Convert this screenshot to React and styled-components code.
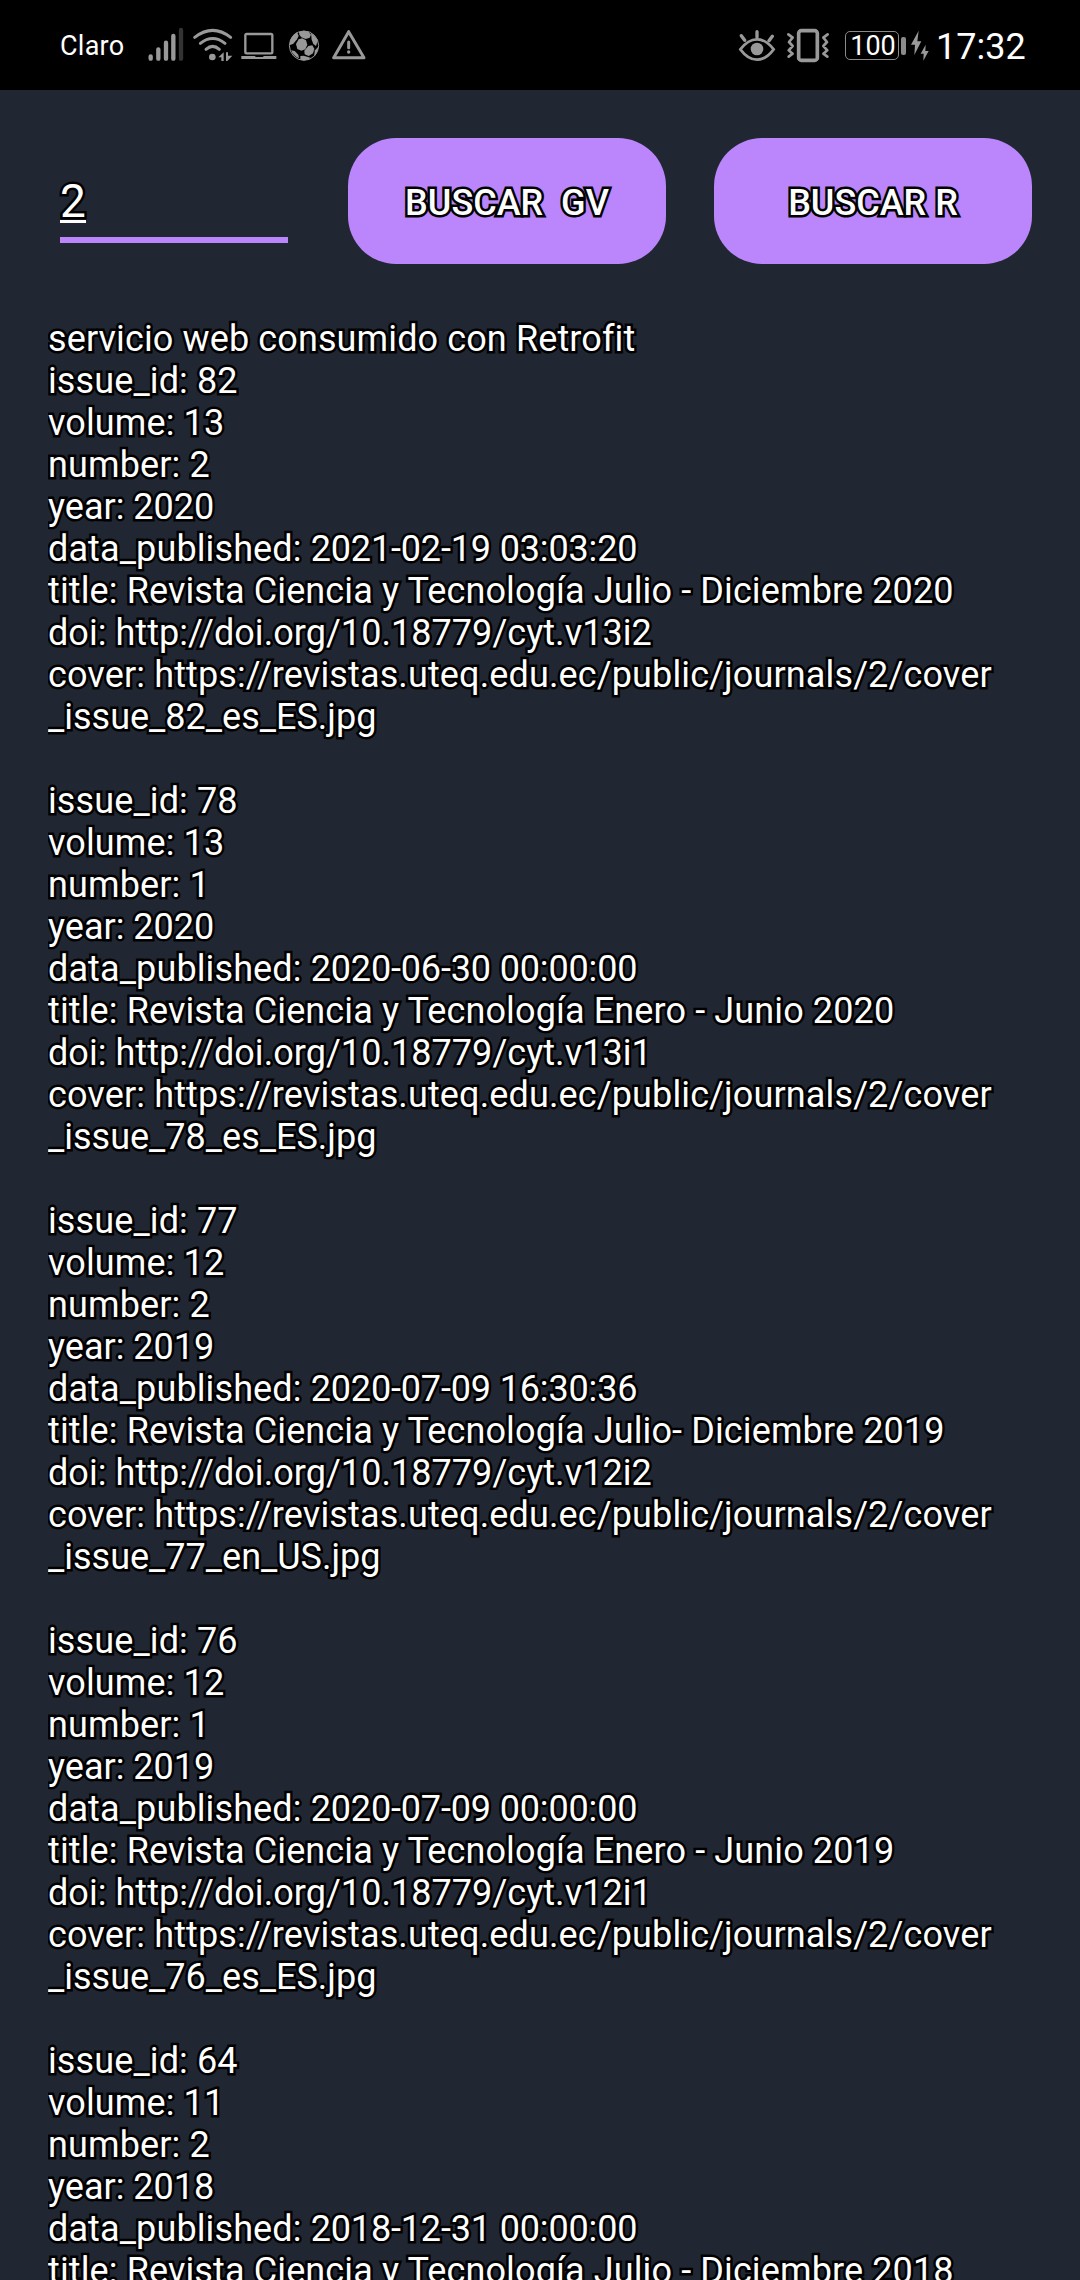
import React from 'react';
import styled, { createGlobalStyle } from 'styled-components';

const GlobalStyle = createGlobalStyle`
  * { box-sizing: border-box; }
  body { margin: 0; background: #212732; font-family: Roboto, sans-serif; }
`;

const Screen = styled.main`
  width: 1080px;
  height: 2280px;
  overflow: hidden;
  display: flex;
  flex-direction: column;
  background: #212732;
`;

const StatusBar = styled.header`
  flex: none;
  display: flex;
  align-items: flex-start;
  justify-content: space-between;
  height: 90px;
  padding: 20px 56px 0 60px;
  background: #000;
  color: #fff;
`;

const StatusGroup = styled.div`
  display: flex;
  align-items: flex-start;
`;

const StatusText = styled.span`
  font-size: ${(p) => p.$size}px;
  line-height: ${(p) => p.$line}px;
  letter-spacing: ${(p) => p.$tracking || 0}px;
  white-space: nowrap;
  width: ${(p) => p.$width}px;
`;

const Icon = styled.svg`
  display: block;
  flex: none;
  color: #999;
`;

const Battery = styled.div`
  display: flex;
  align-items: center;
  margin: 11px 1px 0 13px;
  gap: 2px;
`;

const BatteryBody = styled.span`
  display: flex;
  align-items: center;
  justify-content: center;
  width: 54px;
  height: 29px;
  padding-left: 2px;
  border: 1.5px solid #8a8a8a;
  border-radius: 5px;
  font-size: 27px;
  line-height: 28px;
`;

const BatteryTip = styled.span`
  width: 5px;
  height: 18px;
  border-radius: 2px;
  background: #8a8a8a;
`;

const outline = `
  color: #fff;
  -webkit-text-stroke: 5px #000;
  paint-order: stroke fill;
  stroke-linejoin: round;
`;

const Toolbar = styled.section`
  flex: none;
  display: flex;
  align-items: flex-start;
  gap: 48px;
  padding: 48px 48px 0 60px;
  height: 228px;
`;

const Field = styled.label`
  width: 228px;
  height: 105px;
  margin-right: 12px;
  padding-top: 36px;
  border-bottom: 6px solid #bb86fc;
`;

const FieldValue = styled.span`
  ${outline}
  display: block;
  width: 26px;
  height: 49px;
  border-bottom: 3px solid #fff;
  font-size: 46px;
  line-height: 54px;
`;

const SearchButton = styled.button`
  ${outline}
  width: 318px;
  height: 126px;
  padding: 4px 0 0;
  border: 0;
  border-radius: 48px;
  background: #bb86fc;
  font: 500 36px/42px Roboto, sans-serif;
  white-space: pre;
`;

const Results = styled.section`
  flex: 1;
  min-height: 0;
  margin: 0 48px;
  overflow: hidden;
`;

const Line = styled.p`
  ${outline}
  margin: 0;
  font-size: 36px;
  line-height: 42px;
  height: 42px;
  letter-spacing: ${(p) => p.$tracking ?? 0.12}px;
  white-space: pre;
`;

const Timestamp = styled.span`
  letter-spacing: -0.15px;
`;

const Issue = styled.article`
  margin-bottom: 42px;
`;

const issues = [
  { id: 82, volume: 13, number: 2, year: 2020, date: '2021-02-19 03:03:20', title: 'Julio - Diciembre 2020', file: '82_es_ES' },
  { id: 78, volume: 13, number: 1, year: 2020, date: '2020-06-30 00:00:00', title: 'Enero - Junio 2020', file: '78_es_ES' },
  { id: 77, volume: 12, number: 2, year: 2019, date: '2020-07-09 16:30:36', title: 'Julio- Diciembre 2019', file: '77_en_US' },
  { id: 76, volume: 12, number: 1, year: 2019, date: '2020-07-09 00:00:00', title: 'Enero - Junio 2019', file: '76_es_ES' },
  { id: 64, volume: 11, number: 2, year: 2018, date: '2018-12-31 00:00:00', title: 'Julio - Diciembre 2018' },
];

function IssueEntry({ issue }) {
  return (
    <Issue>
      <Line>issue_id: {issue.id}</Line>
      <Line>volume: {issue.volume}</Line>
      <Line>number: {issue.number}</Line>
      <Line $tracking={0}>year: {issue.year}</Line>
      <Line>data_published: <Timestamp>{issue.date}</Timestamp></Line>
      <Line>title: Revista Ciencia y Tecnología {issue.title}</Line>
      {issue.file && (
        <>
          <Line $tracking={0.05}>doi: http://doi.org/10.18779/cyt.v{issue.volume}i{issue.number}</Line>
          <Line $tracking={0.13}>cover: https://revistas.uteq.edu.ec/public/journals/2/cover</Line>
          <Line $tracking={0}>_issue_{issue.file}.jpg</Line>
        </>
      )}
    </Issue>
  );
}

/* Signal, wifi, laptop, ball and warning glyphs; three drawing units per pixel */
function NotificationIcons() {
  return (
    <Icon width="226" height="50" viewBox="320 30 678 150" fill="none" stroke="currentColor">
      <g strokeWidth="13" strokeLinecap="round">
        <path d="M331 139v7M354 118v28M377 98v48M399 78v68" />
        <path d="M422 60v86" stroke="#333" />
      </g>
      <path d="M463 82Q517 40 571 82M480 100Q517 71 554 100M497 118Q517 100 537 118" strokeWidth="9" strokeLinecap="round" />
      <circle cx="516" cy="141" r="10" fill="currentColor" stroke="none" />
      <path d="M550 127v26h-7v-11h-9ZM557 127h6v10h13l-15 16h-4Z" fill="currentColor" stroke="none" />
      <rect x="615" y="72" width="81" height="58" rx="4" strokeWidth="7" />
      <path d="M603 138h40l4 3h20l4-3h37v9H603Z" fill="currentColor" stroke="none" />
      <circle cx="791" cy="107" r="44" strokeWidth="3" />
      <g fill="currentColor" stroke="none">
        <path d="M776 66l14-4 15 3 7 9-4 9-12 4-13-5-6-8Z" />
        <path d="M775 88l11-3 11 6 4 13-6 14-12 4-12-5-4-15Z" />
        <path d="M770 66l5 12-5 10-11 13-11 5q-1-25 22-40Z" />
        <path d="M812 69q15 9 20 24l-5 15-8-6-5-13-1-10Z" />
        <path d="M804 108l12-2 6 10-4 14-13 8-12-5-1-11Z" />
        <path d="M752 121l11 2 11 11 2 11q-16-5-24-24Z" />
        <path d="M780 138l10-1 13 4 9 3q-15 10-32 5Z" />
        <path d="M834 110q-2 19-13 29l3-18Z" />
      </g>
      <path d="M925 65L971 143H880Z" strokeWidth="9" strokeLinejoin="round" />
      <path d="M925 96v17" strokeWidth="9" strokeLinecap="round" />
      <circle cx="925" cy="126" r="5" fill="currentColor" stroke="none" />
    </Icon>
  );
}

function EyeVibrateIcons() {
  return (
    <Icon width="94" height="50" viewBox="54 30 282 150" fill="none" stroke="currentColor">
      <path d="M61 118Q84 88 111 88T161 118Q138 149 111 149T61 118Z" strokeWidth="8" />
      <circle cx="111" cy="117" r="19" fill="currentColor" stroke="none" />
      <path d="M111 65v17M64 77l10 14M157 79l-10 13" strokeWidth="10" strokeLinecap="round" />
      <rect x="236" y="62" width="56" height="89" rx="8" strokeWidth="11" />
      <path d="M205 73l13 10-11 13 11 12-12 13 12 10-12 9M323 73l-13 10 11 13-11 12 12 13-12 10 12 9" strokeWidth="8" strokeLinejoin="round" strokeLinecap="round" />
    </Icon>
  );
}

function ChargeIcon() {
  return (
    <Icon width="29" height="50" viewBox="560 30 87 150" fill="currentColor">
      <path d="M595 62L572 104h12l-2 31L603 94H591ZM616 104L601 131h9l-1 21L625 123H615Z" />
    </Icon>
  );
}

export default function App() {
  return (
    <Screen>
      <GlobalStyle />
      <StatusBar>
        <StatusGroup>
          <StatusText $size={27} $line={52} $width={87} $tracking={0.25}>Claro</StatusText>
          <NotificationIcons />
        </StatusGroup>
        <StatusGroup>
          <EyeVibrateIcons />
          <Battery>
            <BatteryBody>100</BatteryBody>
            <BatteryTip />
          </Battery>
          <ChargeIcon />
          <StatusText $size={36} $line={55} $width={88}>17:32</StatusText>
        </StatusGroup>
      </StatusBar>
      <Toolbar>
        <Field><FieldValue>2</FieldValue></Field>
        <SearchButton>{'BUSCAR  GV'}</SearchButton>
        <SearchButton>BUSCAR R</SearchButton>
      </Toolbar>
      <Results>
        <Line>servicio web consumido con Retrofit</Line>
        {issues.map((issue) => <IssueEntry key={issue.id} issue={issue} />)}
      </Results>
    </Screen>
  );
}
